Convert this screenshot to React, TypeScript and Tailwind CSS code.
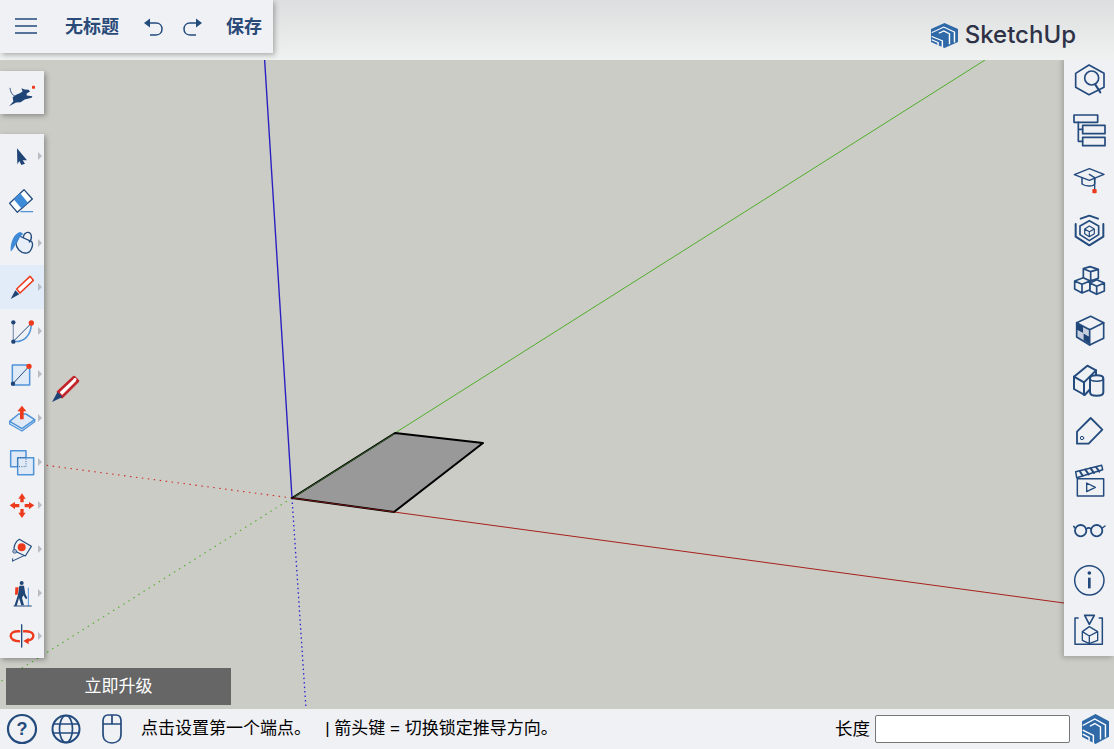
const NAVY = "#234b7d";
const BLUE = "#4f93d8";
const LIGHT = "#dfeaf6";
const RED = "#ee3a1c";

function Z({ vb, size = 32, children }: { vb: string; size?: number; children: React.ReactNode }) {
  return (
    <svg width={size} height={size} viewBox={vb} fill="none" strokeLinecap="round" strokeLinejoin="round" className="shrink-0">
      {children}
    </svg>
  );
}

function Logo({ w, h }: { w: number; h: number }) {
  return (
    <svg width={w} height={h} viewBox="22 19 76 91" preserveAspectRatio="none" className="shrink-0">
      <path d="M60 19 L98 41 V88 L60 110 L22 88 V41 Z" fill="#2f69a8" />
      <g fill="none" stroke="#fff" strokeWidth="4">
        <path d="M24 54 L58 34 L88 52 V90" />
        <path d="M24 68 L54 84 V108" />
        <path d="M44 56 L58 48 L74 58 V96" />
        <path d="M24 80 L42 90 V100" />
      </g>
    </svg>
  );
}

const s = { stroke: NAVY, strokeWidth: 5 };

const leftTools: { icon: React.ReactNode; caret: boolean; active?: boolean }[] = [
  {
    caret: true,
    icon: (
      <Z vb="18 29 96 96">
        <path d="M51 54 L81 90 L68 90 L75 100 L64 104 L58 92 L52 102 Z" fill="#1f4476" />
      </Z>
    ),
  },
  {
    caret: false,
    icon: (
      <Z vb="18 160 96 96">
        <path d="M72 177 L97 205 L52 245 L29 218 Z" fill="#fff" stroke={NAVY} strokeWidth="4" />
        <path d="M60 187 L84 216 L64 233 L41 206 Z" fill="#3f8ad6" />
        <path d="M63 243 H98" stroke={BLUE} strokeWidth="3.5" />
      </Z>
    ),
  },
  {
    caret: true,
    icon: (
      <Z vb="18 291 96 96">
        <path d="M58 318 L95 335 C102 345 92 372 75 369 C62 368 48 355 48 340 Z" fill="#e8eff8" stroke={NAVY} strokeWidth="4" />
        <path d="M70 322 C72 306 92 300 94 318 C95 326 92 332 88 336" stroke={NAVY} strokeWidth="4" />
        <path d="M62 306 C44 308 30 335 32 364 C40 360 44 345 52 335 C56 325 62 318 70 312 Z" fill="#3f8ad6" />
      </Z>
    ),
  },
  {
    caret: true,
    active: true,
    icon: (
      <Z vb="18 422 96 96">
        <path d="M50 476 L90 438 L100 450 L60 488 Z" fill="#fff" stroke={RED} strokeWidth="4.5" />
        <path d="M32 506 L46 480 L58 492 Z" fill="#1f4476" />
      </Z>
    ),
  },
  {
    caret: true,
    icon: (
      <Z vb="18 13 96 96">
        <path d="M40 38 V92" stroke="#8d9db5" strokeWidth="4" />
        <path d="M40 92 L94 38" stroke={NAVY} strokeWidth="3" />
        <path d="M40 92 C70 96 94 76 94 38" stroke={BLUE} strokeWidth="4.5" />
        <circle cx="40" cy="35" r="6.5" fill="#1f4476" />
        <circle cx="40" cy="93" r="6.5" fill="#1f4476" />
        <circle cx="94" cy="37" r="8" fill={RED} />
      </Z>
    ),
  },
  {
    caret: true,
    icon: (
      <Z vb="18 144 96 96">
        <path d="M37 165 H89 V225 H37 Z" fill={LIGHT} stroke={BLUE} strokeWidth="4.5" />
        <path d="M39 221 L87 169" stroke={NAVY} strokeWidth="3" />
        <circle cx="39" cy="221" r="6.5" fill="#1f4476" />
        <circle cx="87" cy="169" r="8" fill={RED} />
      </Z>
    ),
  },
  {
    caret: true,
    icon: (
      <Z vb="18 275 96 96">
        <path d="M29 333 L56 311 H78 L104 328 L66 355 Z" fill={LIGHT} stroke={BLUE} strokeWidth="4.5" />
        <path d="M29 333 V341 L66 362 L104 334 V328" stroke={BLUE} strokeWidth="4" />
        <path d="M66 286 L79 303 H71 V327 H60 V303 H52 Z" fill={RED} />
      </Z>
    ),
  },
  {
    caret: true,
    icon: (
      <Z vb="18 406 96 96">
        <path d="M32 420 H78 V468 H32 Z" fill={LIGHT} stroke={BLUE} strokeWidth="4.5" />
        <path d="M53 441 H101 V492 H53 Z" fill={LIGHT} stroke={BLUE} strokeWidth="4.5" />
        <path d="M53 441 H78 V468 H53 Z" stroke={NAVY} strokeWidth="2.5" strokeDasharray="3 4" strokeLinecap="butt" />
      </Z>
    ),
  },
  {
    caret: true,
    icon: (
      <Z vb="18 -2 96 96">
        <path d="M66 11 L77 27 H71 V38 H61 V27 H55 Z" fill={RED} />
        <path d="M66 85 L77 69 H71 V58 H61 V69 H55 Z" fill={RED} />
        <path d="M29 47 L45 37 V43 H58 V53 H45 V59 Z" fill={RED} />
        <path d="M103 47 L87 37 V43 H74 V53 H87 V59 Z" fill={RED} />
      </Z>
    ),
  },
  {
    caret: true,
    icon: (
      <Z vb="18 128 96 96">
        <path d="M58 147 L94 168 L76 197 L44 182 C38 170 48 152 58 147 Z" fill="#eef1f6" stroke={NAVY} strokeWidth="3.5" />
        <circle cx="65" cy="171" r="12" fill={RED} />
        <circle cx="44" cy="183" r="6" fill="#9fb0c6" stroke={NAVY} strokeWidth="2" />
        <path d="M38 212 L72 196 M38 212 V205" stroke={NAVY} strokeWidth="3" />
      </Z>
    ),
  },
  {
    caret: true,
    icon: (
      <Z vb="18 259 96 96">
        <circle cx="65" cy="277" r="6" fill="#1f4476" />
        <path d="M58 285 H72 L76 310 L82 322 L78 326 L70 314 L66 322 L72 344 H64 L57 322 L50 346 H43 L54 312 Z" fill="#1f4476" />
        <path d="M46 290 H56 L53 312 H45 Z" fill={RED} />
        <path d="M85 292 V345" stroke={BLUE} strokeWidth="3" />
        <path d="M42 346 H94" stroke={NAVY} strokeWidth="3" />
      </Z>
    ),
  },
  {
    caret: true,
    icon: (
      <Z vb="18 391 96 96">
        <path d="M61 425 C41 423 32 430 32 438 C32 448 44 454 60 455" stroke={RED} strokeWidth="7" strokeLinecap="butt" />
        <path d="M69 425 C90 423 100 430 100 438 C100 446 92 451 82 453" stroke={RED} strokeWidth="7" strokeLinecap="butt" />
        <path d="M86 444 V464 L70 454 Z" fill={RED} />
        <path d="M65 405 V472" stroke={NAVY} strokeWidth="4" />
      </Z>
    ),
  },
];

const rightTools: React.ReactNode[] = [
  <Z size={36} vb="51 39 108 108">
    <path d="M105 45 L150 70 V112 L105 134 L65 112 V70 Z" {...s} />
    <circle cx="113" cy="84" r="21" {...s} />
    <path d="M124 104 L139 127" stroke={NAVY} strokeWidth="6" />
  </Z>,
  <Z size={36} vb="51 189 108 108">
    <path d="M60 195 H131 V217 H60 Z M86 226 H153 V251 H86 Z M86 262 H153 V287 H86 Z" {...s} />
    <path d="M73 217 V274 H86 M73 238 H86" {...s} />
  </Z>,
  <Z size={36} vb="51 339 108 108">
    <path d="M61 374 L106 356 L150 373 L106 391 Z" stroke={NAVY} strokeWidth="4.5" />
    <path d="M84 384 V402 C95 410 118 410 122 402 V384" stroke={NAVY} strokeWidth="4.5" />
    <path d="M106 373 L122 383 V416" stroke={NAVY} strokeWidth="4" />
    <rect x="115" y="417" width="13" height="13" rx="3" fill={RED} />
  </Z>,
  <Z size={36} vb="51 489 108 108">
    <path d="M80 506 L106 497 L132 506 M148 522 V560 L106 586 L65 560 V522" stroke={NAVY} strokeWidth="6" />
    <path d="M106 512 L134 528 V554 L106 572 L78 554 V528 Z" stroke={NAVY} strokeWidth="5" />
    <path d="M106 528 L121 537 V551 L106 560 L92 551 V537 Z M92 537 L106 545 L121 537 M106 545 V560" stroke={NAVY} strokeWidth="3.5" />
  </Z>,
  <Z size={36} vb="51 24 108 108">
    <path d="M88 41 L108 35 L133 43 V70 L108 78 L88 70 Z M88 41 L110 50 L133 43 M110 50 V76" stroke={NAVY} strokeWidth="5" />
    <path d="M62 78 L88 68 L108 78 V104 L84 114 L62 102 Z M62 78 L84 88 L108 78 M84 88 V113" stroke={NAVY} strokeWidth="5" fill="#f0f1f5" />
    <path d="M108 84 L128 74 L151 84 V108 L128 118 L108 108 Z M108 84 L128 94 L151 84 M128 94 V117" stroke={NAVY} strokeWidth="5" fill="#f0f1f5" />
  </Z>,
  <Z size={36} vb="51 174 108 108">
    <path d="M68 203 L88 214 V235 L68 224 Z M88 235 L107 245 V268 L88 256 Z" fill="#1f4476" />
    <path d="M68 224 L88 235 V256 L68 246 Z M88 214 L107 224 V245 L88 235 Z" fill="#c4cede" />
    <path d="M68 203 L110 184 L149 203 V250 L107 270 L68 246 Z" stroke={NAVY} strokeWidth="5" />
    <path d="M68 203 L107 224 L149 203 M107 224 V270" stroke={NAVY} strokeWidth="5" />
  </Z>,
  <Z size={36} vb="51 324 108 108">
    <path d="M60 365 L100 332 L126 346 L126 384 L92 420 L60 402 Z" stroke={NAVY} strokeWidth="6" />
    <path d="M60 365 L90 382 L126 346 M90 382 V420" stroke={NAVY} strokeWidth="6" />
    <path d="M108 370 C108 358 148 358 148 370 V412 C148 426 108 426 108 412 Z" fill="#f0f1f5" stroke={NAVY} strokeWidth="6" />
    <path d="M108 370 C108 382 148 382 148 370" stroke={NAVY} strokeWidth="4.5" />
  </Z>,
  <Z size={36} vb="51 474 108 108">
    <path d="M110 489 L145 524 L104 566 H69 V530 Z" stroke={NAVY} strokeWidth="5.5" />
    <circle cx="84" cy="549" r="5" stroke={NAVY} strokeWidth="3" />
  </Z>,
  <Z size={36} vb="51 24 108 108">
    <path d="M70 71 H149 V123 H70 Z" stroke={NAVY} strokeWidth="4.5" strokeLinecap="butt" />
    <path d="M65 50 L143 31 L146 44 L68 68 Z" stroke={NAVY} strokeWidth="4.5" />
    <path d="M77 48 L86 62 M94 44 L104 58 M110 40 L120 54 M126 36 L136 50" stroke={NAVY} strokeWidth="6" />
    <path d="M98 84 L124 97 L98 110 Z" stroke={NAVY} strokeWidth="4" />
  </Z>,
  <Z size={36} vb="51 174 108 108">
    <circle cx="80" cy="227" r="17" stroke={NAVY} strokeWidth="5.5" />
    <circle cx="128" cy="227" r="17" stroke={NAVY} strokeWidth="5.5" />
    <path d="M97 222 C101 218 107 218 111 222 M63 219 L59 214 M145 219 L153 213" stroke={NAVY} strokeWidth="4.5" />
  </Z>,
  <Z size={36} vb="51 324 108 108">
    <circle cx="106" cy="376" r="44" stroke={NAVY} strokeWidth="4.5" />
    <circle cx="106" cy="354" r="5.5" fill="#1f4476" />
    <path d="M106 368 V400" stroke={NAVY} strokeWidth="8" strokeLinecap="butt" />
  </Z>,
  <Z size={36} vb="51 474 108 108">
    <path d="M74 489 H63 V568 H145 V489 H134" stroke={NAVY} strokeWidth="4.5" strokeLinecap="butt" />
    <path d="M92 481 H121 L106 508 Z" stroke={NAVY} strokeWidth="5" />
    <path d="M106 515 L131 530 V556 L106 566 L85 556 V530 Z M85 530 L106 543 L131 530 M106 543 V566" stroke={NAVY} strokeWidth="4" />
  </Z>,
];

function Canvas() {
  return (
    <svg className="absolute inset-0" width="1114" height="649" viewBox="0 60 1114 649" fill="none">
      <path d="M292 498 L395 433 L483 443 L394 512 Z" fill="#999999" />
      <path d="M292 498 L264 50" stroke="#2a1fc0" strokeWidth="1.4" />
      <path d="M292 498 L306 709" stroke="#2a22d0" strokeWidth="1.3" strokeDasharray="1.5 3" />
      <path d="M395 433 L985 60" stroke="#4fae2a" strokeWidth="1" />
      <path d="M292 498 L0 682" stroke="#4fae2a" strokeWidth="1.1" strokeDasharray="1.5 4.5" />
      <path d="M394 512 L1064 603" stroke="#a8201c" strokeWidth="1" />
      <path d="M292 498 L44 465" stroke="#d02a24" strokeWidth="1.1" strokeDasharray="1.5 4.5" />
      <path d="M292 498 L394 512 L483 443 L395 433 Z" stroke="#000" strokeWidth="2" strokeLinejoin="round" />
      <path d="M292 498 L394 512" stroke="#6e1512" strokeWidth="1" />
      <path d="M294 497 L394 434" stroke="#2f5f22" strokeWidth="1" />
    </svg>
  );
}

export default function App() {
  return (
    <div className="relative flex h-[749px] w-[1114px] flex-col overflow-hidden bg-[#cbccc6] font-['Liberation_Sans','Noto_Sans_CJK_SC',sans-serif]">
      <header className="z-20 flex h-[60px] shrink-0 items-start justify-between bg-gradient-to-b from-[#dcdfdf] to-[#f0f1f1]">
        <div className="flex h-[53px] w-[273px] items-center bg-[#f0f1f5] pl-[15px] text-[18px] font-bold text-[#2a4a78] shadow-[2px_2px_5px_rgba(0,0,0,0.28)]">
          <svg width="22" height="16" viewBox="0 0 22 16" className="mt-[-2px] shrink-0">
            <path d="M0 1 H22 M0 8 H22 M0 15 H22" stroke={NAVY} strokeWidth="1.4" fill="none" />
          </svg>
          <span className="ml-[28px] mt-[2px]">无标题</span>
          <svg width="20" height="20" viewBox="0 0 20 20" className="ml-[24px] shrink-0" fill="none">
            <path d="M1 6 L7 1.5 V10.5 Z" fill={NAVY} />
            <path d="M6 6 H13 C21 6 21 18 13 18 H7" stroke={NAVY} strokeWidth="1.5" />
          </svg>
          <svg width="20" height="20" viewBox="0 0 20 20" className="ml-[20px] shrink-0" fill="none">
            <path d="M19 6 L13 1.5 V10.5 Z" fill={NAVY} />
            <path d="M14 6 H7 C-1 6 -1 18 7 18 H13" stroke={NAVY} strokeWidth="1.5" />
          </svg>
          <span className="ml-[23px] mt-[2px]">保存</span>
        </div>
        <div className="mr-[38px] mt-[21px] flex items-center gap-[7px]">
          <Logo w={27} h={25} />
          <span className="font-['Inter',sans-serif] text-[24px] font-medium leading-[28px] text-[#2e3247]">SketchUp</span>
        </div>
      </header>

      <main className="relative flex-1">
        <Canvas />

        <div className="absolute left-0 top-[11px] flex h-[43px] w-[44px] items-center justify-center bg-[#f0f1f5] shadow-[2px_2px_5px_rgba(0,0,0,0.3)]">
          <svg width="28" height="28" viewBox="24 235.5 84 84" fill="none">
            <path d="M27 317 L40 303 L38 290 L46 284 C54 280 62 278 68 272 L64 263 L74 267 L86 268 L90 273 L80 279 L80 285 L97 287 L95 292 L74 297 L62 305 L48 306 Z" fill="#1f4476" />
            <path d="M30 262 C31 275 36 283 46 288" stroke="#1f4476" strokeWidth="2.5" />
            <rect x="96" y="256" width="9" height="9" rx="2" fill={RED} />
          </svg>
        </div>

        <nav className="absolute left-0 top-[74px] flex h-[524px] w-[44px] flex-col bg-[#f0f1f5] shadow-[2px_2px_5px_rgba(0,0,0,0.3)]">
          {leftTools.map((t, i) => (
            <div key={i} className={`flex flex-1 items-center pl-[6px] ${t.active ? "bg-[#e1ecf8]" : ""}`}>
              {t.icon}
              {t.caret && <span className="h-0 w-0 border-y-[4px] border-l-[4px] border-y-transparent border-l-[#b9bcc2]" />}
            </div>
          ))}
        </nav>

        <button className="absolute left-[6px] top-[608px] h-[37px] w-[225px] bg-[#666666] text-[17px] text-white">立即升级</button>

        <svg className="absolute left-[50px] top-[314px]" width="30" height="30" viewBox="0 0 30 30" fill="none">
          <path d="M8 18 L24 3 L28 7 L12 23 Z" fill="#fff" stroke="#c4252a" strokeWidth="2.6" strokeLinejoin="round" />
          <circle cx="25" cy="5.5" r="1.4" fill="#fff" />
          <path d="M2 28 L7.5 18 L12.5 23 Z" fill="#1f4476" />
        </svg>

        <aside className="absolute right-0 top-[-4px] flex w-[50px] flex-col bg-[#f0f1f5] shadow-[-2px_2px_5px_rgba(0,0,0,0.2)]">
          {rightTools.map((icon, i) => (
            <div key={i} className="flex h-[50px] items-center justify-center">
              {icon}
            </div>
          ))}
        </aside>
      </main>

      <footer className="z-10 flex h-[40px] shrink-0 items-center bg-[#f0f1f5] text-black">
        <svg width="32" height="32" viewBox="0 0 32 32" className="ml-[6px] shrink-0" fill="none">
          <circle cx="16" cy="16" r="14" stroke={NAVY} strokeWidth="2.2" />
          <text x="16" y="22" textAnchor="middle" fontSize="18" fontWeight="700" fill={NAVY} fontFamily="Liberation Sans">?</text>
        </svg>
        <svg width="32" height="32" viewBox="0 0 32 32" className="ml-[12px] shrink-0" fill="none" stroke={NAVY} strokeWidth="1.7">
          <circle cx="16" cy="16" r="13.5" strokeWidth="2" />
          <ellipse cx="16" cy="16" rx="6.5" ry="13.5" />
          <path d="M3 11 H29 M3 20 H29" />
        </svg>
        <svg width="20" height="30" viewBox="1 0 20 30" className="ml-[20px] shrink-0" fill="none" stroke={NAVY} strokeWidth="1.7">
          <path d="M2 7 C2 3 4 1 7 1 H15 C18 1 20 3 20 7 V20 C20 26 16 29 11 29 C6 29 2 26 2 20 Z" />
          <path d="M2 10 H20 M11 1 V10" />
        </svg>
        <span className="ml-[19px] whitespace-pre text-[17px]">点击设置第一个端点。   | 箭头键 = 切换锁定推导方向。</span>
        <span className="ml-auto text-[17.5px]">长度</span>
        <input aria-label="长度" className="ml-[5px] h-[28px] w-[195px] rounded-[2px] border border-[#767676] bg-white" />
        <span className="ml-[12px] mr-[5px] flex"><Logo w={27} h={30} /></span>
      </footer>
    </div>
  );
}
